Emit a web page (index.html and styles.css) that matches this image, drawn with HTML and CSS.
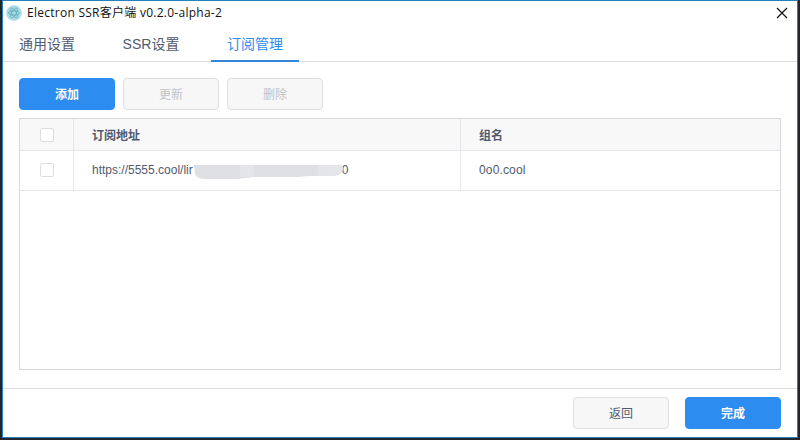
FILE: index.html
```html
<!DOCTYPE html>
<html lang="zh-CN">
<head>
<meta charset="utf-8">
<title>Electron SSR客户端</title>
<link rel="stylesheet" href="styles.css">
</head>
<body>
<div class="window">
  <header class="titlebar">
    <svg class="logo" width="16" height="16" viewBox="0 0 16 16">
      <circle cx="8" cy="8" r="7.8" fill="#a9dde6"/>
      <g fill="none" stroke="#5aa5b4" stroke-width=".7">
        <ellipse cx="8" cy="8" rx="5.6" ry="2.2"/>
        <ellipse cx="8" cy="8" rx="5.6" ry="2.2" transform="rotate(60 8 8)"/>
        <ellipse cx="8" cy="8" rx="5.6" ry="2.2" transform="rotate(120 8 8)"/>
      </g>
    </svg>
    <span class="title">Electron SSR客户端 v0.2.0-alpha-2</span>
    <svg class="close" width="12" height="12" viewBox="0 0 12 12"><path d="M1 1 11 11M11 1 1 11" stroke="#111" stroke-width="1.2"/></svg>
  </header>
  <nav class="tabs">
    <div class="tab">通用设置</div>
    <div class="tab">SSR设置</div>
    <div class="tab active">订阅管理</div>
  </nav>
  <main class="content">
    <div class="toolbar">
      <button class="btn primary">添加</button>
      <button class="btn" disabled>更新</button>
      <button class="btn" disabled>删除</button>
    </div>
    <div class="table">
      <div class="row head">
        <div class="check"><i class="box"></i></div>
        <div class="cell url">订阅地址</div>
        <div class="cell">组名</div>
      </div>
      <div class="row">
        <div class="check"><i class="box"></i></div>
        <div class="cell url"><span>https://5555.cool/lir</span><svg class="smudge" width="151" height="17" viewBox="0 0 151 17">
          <path d="M1 2H148L150 5Q150 12 139 13H115L106 14H60L44 16H12Q4 16 2 11Z" fill="#dfe0e3"/>
          <path d="M47 2H61V14H47ZM125 2H148L150 5Q150 12 139 13H125Z" fill="#e4e5e8"/>
        </svg><span class="tail">0</span></div>
        <div class="cell host">0o0.cool</div>
      </div>
    </div>
  </main>
  <footer class="footer">
    <button class="btn">返回</button>
    <button class="btn primary">完成</button>
  </footer>
</div>
</body>
</html>
```
FILE: styles.css
```css
* { box-sizing: border-box; }
body {
  margin: 0;
  height: 440px;
  padding: 0 2px 2px;
  background: #24262e;
  font: 12px "Liberation Sans", "Noto Sans CJK SC", sans-serif;
  color: #515a6e;
}
.window {
  height: 438px;
  border: 1px solid #2581bd;
  background: #fff;
  display: flex;
  flex-direction: column;
}
.titlebar {
  height: 24px;
  padding: 0 9px 0 3px;
  display: flex;
  align-items: center;
}
.title {
  margin-left: 5px;
  font: 12px/24px "Open Sans", "Noto Sans CJK SC", sans-serif;
  letter-spacing: .26px;
  color: #111;
  white-space: nowrap;
}
.close { margin-left: auto; }
.tabs {
  height: 37px;
  display: flex;
  gap: 16px;
  border-bottom: 1px solid #dcdee2;
}
.tab {
  width: 88px;
  height: 37px;
  font-size: 14px;
  line-height: 38px;
  text-align: center;
  white-space: nowrap;
}
.tab.active {
  color: #2d8cf0;
  border-bottom: 2px solid #3484d8;
}
.content {
  flex: 1;
  padding: 16px 16px 18px;
  display: flex;
  flex-direction: column;
  gap: 8px;
}
.toolbar { display: flex; gap: 8px; }
.btn {
  width: 96px;
  height: 32px;
  padding: 0 0 2px;
  border: 1px solid #dcdee2;
  border-radius: 4px;
  background: #f7f7f7;
  color: #515a6e;
  font: inherit;
}
.btn:disabled { color: #c0c3c9; }
.btn.primary {
  background: #2d8cf0;
  border-color: #2d8cf0;
  color: #fff;
  font-weight: bold;
}
.table { flex: 1; border: 1px solid #d7dadd; }
.row {
  height: 40px;
  display: flex;
  border-bottom: 1px solid #e5e6e9;
}
.row.head {
  height: 32px;
  background: #f8f8f9;
  font-weight: bold;
}
.check {
  width: 54px;
  border-right: 1px solid #e5e6e9;
  display: flex;
  align-items: center;
  justify-content: center;
}
.row:not(.head) .check,
.row:not(.head) .cell { padding-bottom: 1px; }
.box {
  width: 14px;
  height: 14px;
  border: 1px solid #dcdee2;
  border-radius: 2px;
  background: #fff;
}
.cell {
  padding-left: 18px;
  display: flex;
  align-items: center;
  white-space: nowrap;
}
.url { width: 387px; border-right: 1px solid #e5e6e9; }
.host { letter-spacing: .15px; }
.smudge { position: relative; z-index: 1; top: 1px; }
.tail { margin-left: -2px; }
.footer {
  height: 49px;
  padding: 8px 16px;
  border-top: 1px solid #dcdee2;
  display: flex;
  justify-content: flex-end;
  gap: 16px;
}
```
